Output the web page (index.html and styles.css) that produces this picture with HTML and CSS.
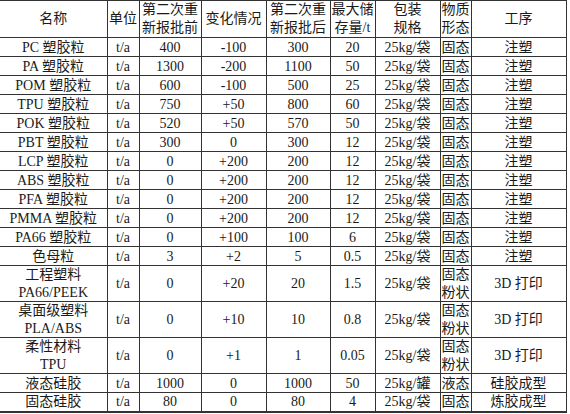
FILE: index.html
```html
<!DOCTYPE html>
<html lang="zh">
<head>
<meta charset="utf-8">
<title>原料表</title>
<link rel="stylesheet" href="styles.css">
</head>
<body>
<table class="tbl">
<colgroup>
<col class="c1"><col class="c2"><col class="c3"><col class="c4"><col class="c5"><col class="c6"><col class="c7"><col class="c8"><col class="c9">
</colgroup>
<thead>
<tr class="head">
<th class="first">名称</th><th>单位</th><th>第二次重<br>新报批前</th><th>变化情况</th><th>第二次重<br>新报批后</th><th>最大储<br>存量/t</th><th>包装<br>规格</th><th>物质<br>形态</th><th>工序</th>
</tr>
</thead>
<tbody>
<tr><td class="first">PC 塑胶粒</td><td>t/a</td><td>400</td><td>-100</td><td>300</td><td>20</td><td>25kg/袋</td><td>固态</td><td>注塑</td></tr>
<tr><td class="first">PA 塑胶粒</td><td>t/a</td><td>1300</td><td>-200</td><td>1100</td><td>50</td><td>25kg/袋</td><td>固态</td><td>注塑</td></tr>
<tr><td class="first">POM 塑胶粒</td><td>t/a</td><td>600</td><td>-100</td><td>500</td><td>25</td><td>25kg/袋</td><td>固态</td><td>注塑</td></tr>
<tr><td class="first">TPU 塑胶粒</td><td>t/a</td><td>750</td><td>+50</td><td>800</td><td>60</td><td>25kg/袋</td><td>固态</td><td>注塑</td></tr>
<tr><td class="first">POK 塑胶粒</td><td>t/a</td><td>520</td><td>+50</td><td>570</td><td>50</td><td>25kg/袋</td><td>固态</td><td>注塑</td></tr>
<tr><td class="first">PBT 塑胶粒</td><td>t/a</td><td>300</td><td>0</td><td>300</td><td>12</td><td>25kg/袋</td><td>固态</td><td>注塑</td></tr>
<tr><td class="first">LCP 塑胶粒</td><td>t/a</td><td>0</td><td>+200</td><td>200</td><td>12</td><td>25kg/袋</td><td>固态</td><td>注塑</td></tr>
<tr><td class="first">ABS 塑胶粒</td><td>t/a</td><td>0</td><td>+200</td><td>200</td><td>12</td><td>25kg/袋</td><td>固态</td><td>注塑</td></tr>
<tr><td class="first">PFA 塑胶粒</td><td>t/a</td><td>0</td><td>+200</td><td>200</td><td>12</td><td>25kg/袋</td><td>固态</td><td>注塑</td></tr>
<tr><td class="first">PMMA 塑胶粒</td><td>t/a</td><td>0</td><td>+200</td><td>200</td><td>12</td><td>25kg/袋</td><td>固态</td><td>注塑</td></tr>
<tr><td class="first">PA66 塑胶粒</td><td>t/a</td><td>0</td><td>+100</td><td>100</td><td>6</td><td>25kg/袋</td><td>固态</td><td>注塑</td></tr>
<tr><td class="first">色母粒</td><td>t/a</td><td>3</td><td>+2</td><td>5</td><td>0.5</td><td>25kg/袋</td><td>固态</td><td>注塑</td></tr>
<tr class="tall"><td class="first">工程塑料<br>PA66/PEEK</td><td>t/a</td><td>0</td><td>+20</td><td>20</td><td>1.5</td><td>25kg/袋</td><td>固态<br>粉状</td><td>3D 打印</td></tr>
<tr class="tall"><td class="first">桌面级塑料<br>PLA/ABS</td><td>t/a</td><td>0</td><td>+10</td><td>10</td><td>0.8</td><td>25kg/袋</td><td>固态<br>粉状</td><td>3D 打印</td></tr>
<tr class="tall"><td class="first">柔性材料<br>TPU</td><td>t/a</td><td>0</td><td>+1</td><td>1</td><td>0.05</td><td>25kg/袋</td><td>固态<br>粉状</td><td>3D 打印</td></tr>
<tr><td class="first">液态硅胶</td><td>t/a</td><td>1000</td><td>0</td><td>1000</td><td>50</td><td>25kg/罐</td><td>液态</td><td>硅胶成型</td></tr>
<tr><td class="first">固态硅胶</td><td>t/a</td><td>80</td><td>0</td><td>80</td><td>4</td><td>25kg/袋</td><td>固态</td><td>炼胶成型</td></tr>
</tbody>
</table>
</body>
</html>
```
FILE: styles.css
```css
html, body {
  margin: 0;
  padding: 0;
  background: #ffffff;
}
body {
  font-family: "Liberation Serif", "Noto Sans CJK SC", serif;
  font-size: 14px;
  color: #1a1a1a;
}
.tbl {
  border-collapse: collapse;
  table-layout: fixed;
  width: 566px;
  border-bottom: 2px solid #333333;
}
.c1 { width: 107px; }
.c2 { width: 32px; }
.c3 { width: 62px; }
.c4 { width: 65px; }
.c5 { width: 64px; }
.c6 { width: 45px; }
.c7 { width: 65px; }
.c8 { width: 31px; }
.c9 { width: 95px; }
.tbl th,
.tbl td {
  border: 1px solid #333333;
  padding: 0;
  text-align: center;
  vertical-align: middle;
  font-weight: normal;
  line-height: 17px;
  white-space: nowrap;
  overflow: hidden;
}
.tbl .first {
  border-left: none;
}
.tbl tr {
  height: 19px;
}
.tbl tr.head {
  height: 37px;
}
.tbl tr.tall {
  height: 36px;
}
.tbl tr.head th {
  line-height: 18px;
}
.tbl tr.tall td {
  line-height: 17.5px;
}
```
